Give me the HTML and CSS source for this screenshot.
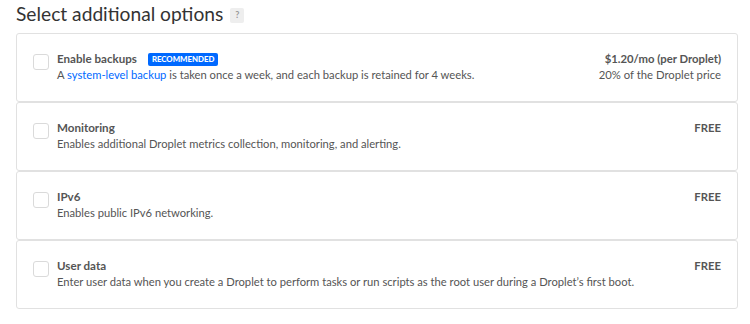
FILE: index.html
```html
<!DOCTYPE html>
<html>
<head>
<meta charset="utf-8">
<link rel="stylesheet" href="styles.css">
</head>
<body>
<div class="page">
  <h2 class="heading">Select additional options <span class="help">?</span></h2>
  <div class="options">
    <div class="option">
      <span class="check"></span>
      <div class="info">
        <div class="name">Enable backups <span class="badge">RECOMMENDED</span></div>
        <div class="desc">A <a class="link">system-level backup</a> is taken once a week, and each backup is retained for 4 weeks.</div>
      </div>
      <div class="price">
        <div class="amount">$1.20/mo (per Droplet)</div>
        <div class="note">20% of the Droplet price</div>
      </div>
    </div>
    <div class="option">
      <span class="check"></span>
      <div class="info">
        <div class="name">Monitoring</div>
        <div class="desc">Enables additional Droplet metrics collection, monitoring, and alerting.</div>
      </div>
      <div class="price"><div class="amount">FREE</div></div>
    </div>
    <div class="option">
      <span class="check"></span>
      <div class="info">
        <div class="name">IPv6</div>
        <div class="desc">Enables public IPv6 networking.</div>
      </div>
      <div class="price"><div class="amount">FREE</div></div>
    </div>
    <div class="option">
      <span class="check"></span>
      <div class="info">
        <div class="name">User data</div>
        <div class="desc">Enter user data when you create a Droplet to perform tasks or run scripts as the root user during a Droplet’s first boot.</div>
      </div>
      <div class="price"><div class="amount">FREE</div></div>
    </div>
  </div>
</div>
</body>
</html>
```

FILE: styles.css
```css
html, body {
  margin: 0;
  padding: 0;
  background: #fff;
}
body {
  font-family: Lato, "Open Sans", sans-serif;
  color: #444;
}
.page {
  padding: 0 12px 0 16px;
}
.heading {
  margin: 0 0 6px;
  height: 27px;
  font-size: 19.2px;
  line-height: 24px;
  font-weight: 400;
  color: #333;
  display: flex;
  align-items: center;
  gap: 7px;
}
.help {
  display: inline-flex;
  align-items: center;
  justify-content: center;
  width: 14px;
  height: 15px;
  background: #eeeeee;
  color: #999;
  font-size: 9px;
  font-weight: 700;
  border-radius: 2px;
  margin-top: 3px;
}
.options {
  display: flex;
  flex-direction: column;
}
.option {
  display: flex;
  align-items: flex-start;
  border: 1px solid #e1e1e1;
  border-radius: 3px;
  padding: 17px 16px 18px 16px;
  height: 69px;
  box-sizing: border-box;
}
.check {
  flex: none;
  width: 16px;
  height: 16px;
  border: 1px solid #dadada;
  border-radius: 3px;
  margin-top: 3px;
  margin-right: 8px;
  box-sizing: border-box;
}
.info {
  flex: 1;
}
.name {
  font-size: 11.6px;
  line-height: 16px;
  font-weight: 700;
  color: #555;
  display: flex;
  align-items: center;
  gap: 11px;
}
.badge {
  display: inline-block;
  background: #0069ff;
  color: #fff;
  font-size: 7.8px;
  line-height: 13px;
  padding: 0 4px;
  border-radius: 2px;
  font-weight: 900;
}
.desc {
  font-size: 11.2px;
  line-height: 16px;
  color: #555;
}
.link {
  color: #0069ff;
  text-decoration: none;
}
.price {
  text-align: right;
  font-size: 11.3px;
  line-height: 16px;
}
.amount {
  font-weight: 700;
  color: #555;
}
.note {
  color: #555;
}
```
